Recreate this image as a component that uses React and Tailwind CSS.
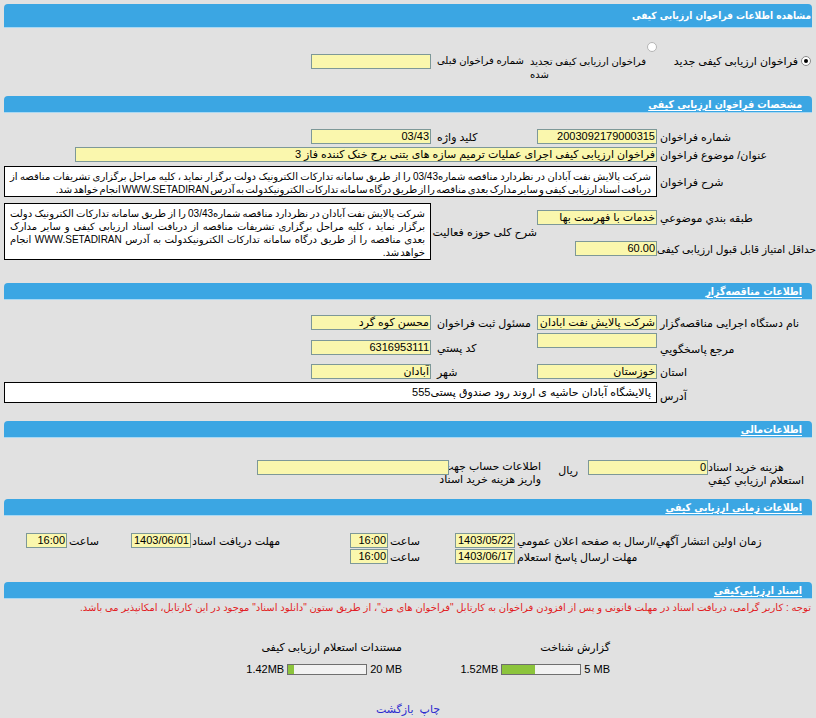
import clsx from 'clsx';

// Read-only yellow field, as the old form renders its inputs
function Field({ w, children, className }) {
  return (
    <div
      className={clsx(
        'h-[15px] shrink-0 border border-[#7d9898] bg-[#faf7ad] px-[1px] leading-[13px] whitespace-nowrap overflow-hidden',
        w,
        className
      )}
    >
      {children}
    </div>
  );
}

function Bar({ children, big }) {
  return (
    <div
      className={clsx(
        "mx-[4px] rounded-t-[4px] bg-[#3ba6e3] border-b border-[#a9d8f3] text-white font-bold font-['DejaVu_Sans_Condensed','DejaVu_Sans',sans-serif] [font-stretch:condensed]",
        big ? 'h-[24px] text-[10px] leading-[23px] pr-[1px]' : 'h-[17px] text-[10.5px] leading-[16px] pr-[10px]'
      )}
    >
      <span className={big ? '' : 'underline underline-offset-2'}>{children}</span>
    </div>
  );
}

function Radio({ checked }) {
  return (
    <span
      className={clsx(
        'inline-flex h-[10px] w-[10px] shrink-0 items-center justify-center rounded-full border bg-white',
        checked ? 'border-[#8a8a8a]' : 'border-[#b5b5b5]'
      )}
    >
      {checked && <span className="h-[4px] w-[4px] rounded-full bg-black" />}
    </span>
  );
}

function Progress({ used, max, pct }) {
  return (
    <div dir="ltr" className="flex items-center gap-[3px]">
      <span>{used}</span>
      <div className="flex h-[11px] w-[80px] border border-[#6f6f6f] bg-[#f2f2f2]">
        <div className="h-full bg-[#8cc43c]" style={{ width: pct + '%' }} />
      </div>
      <span>{max}</span>
    </div>
  );
}

// justified text block, one div per line as in the reference
function TextBox({ lines, className }) {
  return (
    <div className={clsx('border border-black bg-white px-[5px] pt-[3px] text-[10px] leading-[13px] [word-spacing:-1.5px] overflow-hidden', className)}>
      {lines.map((l, i) => (
        <div key={i} className={i < lines.length - 1 ? 'text-justify [text-align-last:justify]' : ''}>
          {l}
        </div>
      ))}
    </div>
  );
}

export default function App() {
  return (
    <div
      dir="rtl"
      className="w-[816px] h-[718px] overflow-hidden bg-[#e1e1e1] pt-[4px] text-[11px] leading-[14px] text-black font-['Liberation_Sans','DejaVu_Sans',sans-serif]"
    >
      <Bar big>مشاهده اطلاعات فراخوان ارزیابی کیفی</Bar>

      {/* نوع فراخوان */}
      <div className="mt-[14px] flex items-center h-[38px]">
        <div className="w-[159px] flex items-center gap-[3px] pr-[5px]">
          <Radio checked />
          <span>فراخوان ارزیابی کیفی جدید</span>
        </div>
        <div className="w-[120px] self-start">
          <div className="flex">
            <Radio />
          </div>
          <div className="pr-[11px] mt-[3px]">
            <div className="inline-block text-left text-[10px] leading-[13px] whitespace-nowrap">
              فراخوان ارزیابی کیفی تجدید
              <br />
              شده
            </div>
          </div>
        </div>
        <div className="w-[106px] text-left pl-[6px] text-[10px]">شماره فراخوان قبلی</div>
        <Field w="w-[120px]" />
      </div>

      <div className="mt-[16px]">
        <Bar>مشخصات فراخوان ارزیابی کیفی</Bar>
      </div>

      <div className="mt-[16px] flex items-center">
        <div className="w-[159px] text-left pl-[3px]">شماره فراخوان</div>
        <Field w="w-[120px]">2003092179000315</Field>
        <div className="w-[106px] text-left pl-[6px]">کلید واژه</div>
        <Field w="w-[120px]">03/43</Field>
      </div>

      <div className="mt-[3px] flex items-center">
        <div className="w-[159px] text-left pl-[3px]">عنوان/ موضوع فراخوان</div>
        <Field w="w-[582px]">فراخوان ارزیابی کیفی اجرای عملیات ترمیم سازه های بتنی برج خنک کننده فاز 3</Field>
      </div>

      <div className="mt-[4px] flex items-center">
        <div className="w-[159px] text-left pl-[3px]">شرح فراخوان</div>
        <TextBox
          className="w-[653px] h-[31px] pt-[2px]"
          lines={[
            'شرکت پالایش نفت آبادان در نظردارد مناقصه شماره03/43 را از طریق سامانه تدارکات الکترونیک دولت برگزار نماید ، کلیه مراحل برگزاری تشریفات مناقصه از',
            'دریافت اسناد ارزیابی کیفی و سایر مدارک بعدی مناقصه را از طریق درگاه سامانه تدارکات الکترونیکدولت به آدرس  WWW.SETADIRAN انجام خواهد شد.',
          ]}
        />
      </div>

      <div className="mt-[6px] flex items-center">
        <div className="w-[279px] flex flex-col gap-[16px] pt-[7px] self-start">
          <div className="flex items-center">
            <div className="w-[159px] text-left pl-[3px]">طبقه بندي موضوعي</div>
            <Field w="w-[120px]">خدمات با فهرست بها</Field>
          </div>
          <div className="flex items-center">
            <div className="w-[159px] text-left pl-[3px] text-[10.5px] whitespace-nowrap">حداقل امتیاز قابل قبول ارزیابی کیفی</div>
            <Field w="w-[82px]">60.00</Field>
          </div>
        </div>
        <div className="w-[106px] text-left pl-[2px] whitespace-nowrap">شرح کلی حوزه فعالیت</div>
        <TextBox
          className="w-[427px] h-[57px]"
          lines={[
            'شرکت پالایش نفت آبادان در نظردارد مناقصه شماره03/43 را از طریق سامانه تدارکات الکترونیک دولت',
            'برگزار نماید ، کلیه مراحل برگزاری تشریفات مناقصه از دریافت اسناد ارزیابی کیفی و سایر مدارک',
            'بعدی مناقصه را از طریق درگاه سامانه تدارکات الکترونیکدولت به آدرس  WWW.SETADIRAN انجام',
            'خواهد شد.',
          ]}
        />
      </div>

      <div className="mt-[23px]">
        <Bar>اطلاعات مناقصه‌گزار</Bar>
      </div>

      <div className="mt-[15px] flex items-center">
        <div className="w-[159px] text-left pl-[3px]">نام دستگاه اجرایی مناقصه‌گزار</div>
        <Field w="w-[120px]">شرکت پالایش نفت ابادان</Field>
        <div className="w-[106px] text-left pl-[6px]">مسئول ثبت فراخوان</div>
        <Field w="w-[120px]">محسن کوه گرد</Field>
      </div>

      <div className="mt-[3px] flex items-start h-[28px]">
        <div className="w-[159px] text-left pl-[3px] mt-[9px]">مرجع پاسخگويي</div>
        <Field w="w-[120px]" />
        <div className="w-[106px] text-left pl-[6px] mt-[8px]">کد پستي</div>
        <Field w="w-[120px]" className="mt-[7px]">6316953111</Field>
      </div>

      <div className="mt-[3px] flex items-center">
        <div className="w-[159px] text-left pl-[3px]">استان</div>
        <Field w="w-[120px]">خوزستان</Field>
        <div className="w-[106px] text-left pl-[6px]">شهر</div>
        <Field w="w-[120px]">آبادان</Field>
      </div>

      <div className="mt-[3px] flex items-center">
        <div className="w-[159px] text-left pl-[3px] pt-[6px]">آدرس</div>
        <div className="w-[653px] h-[21px] border border-black bg-white px-[5px] leading-[19px]">
          پالایشگاه آبادان حاشیه ی اروند رود صندوق پستی555
        </div>
      </div>

      <div className="mt-[18px]">
        <Bar>اطلاعات‌مالی</Bar>
      </div>

      <div className="mt-[22px] flex items-start">
        <div className="w-[108px] text-left leading-[13px] pt-[1px]">
          هزینه خرید اسناد
          <br />
          استعلام ارزیابي کیفي
        </div>
        <Field w="w-[120px]">0</Field>
        <div className="w-[47px] pr-[10px] pt-[3px]">ریال</div>
        <div className="w-[92px] text-left leading-[13px] whitespace-nowrap">
          اطلاعات حساب جهت
          <br />
          واریز هزینه خرید اسناد
        </div>
        <Field w="w-[192px]" />
      </div>

      <div className="mt-[12px]">
        <Bar>اطلاعات زمانی ارزیابی کیفی</Bar>
      </div>

      <div className="mt-[17px] flex items-center">
        <div className="w-[301px] text-left pl-[2px]">زمان اولين انتشار آگهي/ارسال به صفحه اعلان عمومي</div>
        <Field w="w-[60px]">1403/05/22</Field>
        <div className="w-[67px] text-left pl-[2px]">ساعت</div>
        <Field w="w-[38px]">16:00</Field>
        <div className="w-[159px] text-left pl-[1px]">مهلت دريافت اسناد</div>
        <Field w="w-[60px]">1403/06/01</Field>
        <div className="w-[64px] text-left pl-[2px]">ساعت</div>
        <Field w="w-[41px]">16:00</Field>
      </div>

      <div className="mt-[1px] flex items-center">
        <div className="w-[301px] text-left pl-[2px]">مهلت ارسال پاسخ استعلام</div>
        <Field w="w-[60px]">1403/06/17</Field>
        <div className="w-[67px] text-left pl-[2px]">ساعت</div>
        <Field w="w-[38px]">16:00</Field>
      </div>

      <div className="mt-[18px]">
        <Bar>اسناد ارزیابی‌کیفی</Bar>
      </div>

      <div className="mt-[2px] pr-[5px] text-[10px] text-[#e11d24] leading-[13px] whitespace-nowrap">
        توجه : کاربر گرامی، دریافت اسناد در مهلت قانونی و پس از افزودن فراخوان به کارتابل "فراخوان های من"، از طریق ستون "دانلود اسناد" موجود در این کارتابل، امکانپذیر می باشد.
      </div>

      <div className="mt-[26px] flex pr-[206px]">
        <div className="w-[208px] flex flex-col items-start gap-[8px]">
          <div>گزارش شناخت</div>
          <Progress used="1.52MB" max="5 MB" pct={42} />
        </div>
        <div className="flex flex-col items-start gap-[8px]">
          <div>مستندات استعلام ارزیابی کیفی</div>
          <Progress used="1.42MB" max="20 MB" pct={8} />
        </div>
      </div>

      <div className="mt-[26px] flex justify-center gap-[6px] text-[#2b2bcf]">
        <span>چاپ</span>
        <span>بازگشت</span>
      </div>
    </div>
  );
}
